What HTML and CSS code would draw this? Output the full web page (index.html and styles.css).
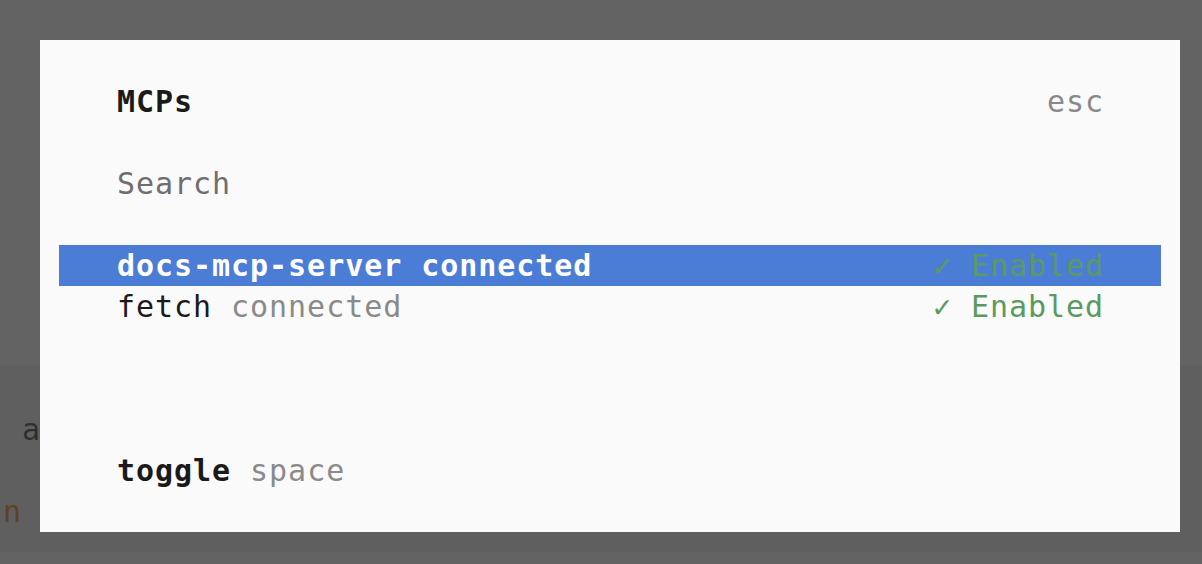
FILE: index.html
```html
<!DOCTYPE html>
<html>
<head>
<meta charset="utf-8">
<link rel="stylesheet" href="styles.css">
</head>
<body>
<div class="term">
  <div class="term-top"></div>
  <div class="term-mid">
    <div class="tline"><span class="dim-a">&nbsp;a</span></div>
    <div class="tline"></div>
    <div class="tline"><span class="brown">n</span></div>
  </div>
</div>
<div class="modal">
  <div class="line"><span class="title">MCPs</span><span class="muted">esc</span></div>
  <div class="line"></div>
  <div class="line"><span class="search">Search</span></div>
  <div class="line"></div>
  <div class="line row selected"><span class="name">docs-mcp-server connected</span><span class="ok">✓ Enabled</span></div>
  <div class="line row"><span><span class="name">fetch</span> <span class="muted">connected</span></span><span class="ok">✓ Enabled</span></div>
  <div class="line"></div>
  <div class="line"></div>
  <div class="line"></div>
  <div class="line"><span><span class="key">toggle</span> <span class="muted">space</span></span></div>
</div>
</body>
</html>
```
FILE: styles.css
```css
html, body {
  margin: 0;
  padding: 0;
}
body {
  width: 1202px;
  height: 564px;
  overflow: hidden;
  background: #636363;
  font-family: "DejaVu Sans Mono", monospace;
  position: relative;
}
.term-top {
  height: 366px;
}
.term-mid {
  height: 186px;
  background: #5f5f5f;
  padding: 43px 0 0 3px;
  box-sizing: border-box;
}
.tline {
  height: 41px;
  line-height: 41px;
  font-size: 30px;
  letter-spacing: 0.95px;
  white-space: pre;
}
.dim-a {
  color: #2f2f2f;
}
.brown {
  color: #5c4322;
}
.modal {
  position: absolute;
  left: 40px;
  top: 40px;
  width: 1140px;
  height: 492px;
  background: #fafafa;
  padding: 41px 19px;
  box-sizing: border-box;
}
.line {
  height: 41px;
  line-height: 41px;
  padding: 0 57px 0 58px;
  display: flex;
  justify-content: space-between;
  font-size: 30px;
  letter-spacing: 0.95px;
  color: #1a1a1a;
  white-space: pre;
}
.title {
  font-weight: bold;
  color: #1a1a1a;
}
.muted {
  color: #8a8a8a;
}
.search {
  color: #6e6e6e;
}
.ok {
  color: #5b9a5f;
}
.selected {
  background: #4c7dd6;
}
.selected .name {
  color: #ffffff;
  font-weight: bold;
}
.key {
  font-weight: bold;
}
```
